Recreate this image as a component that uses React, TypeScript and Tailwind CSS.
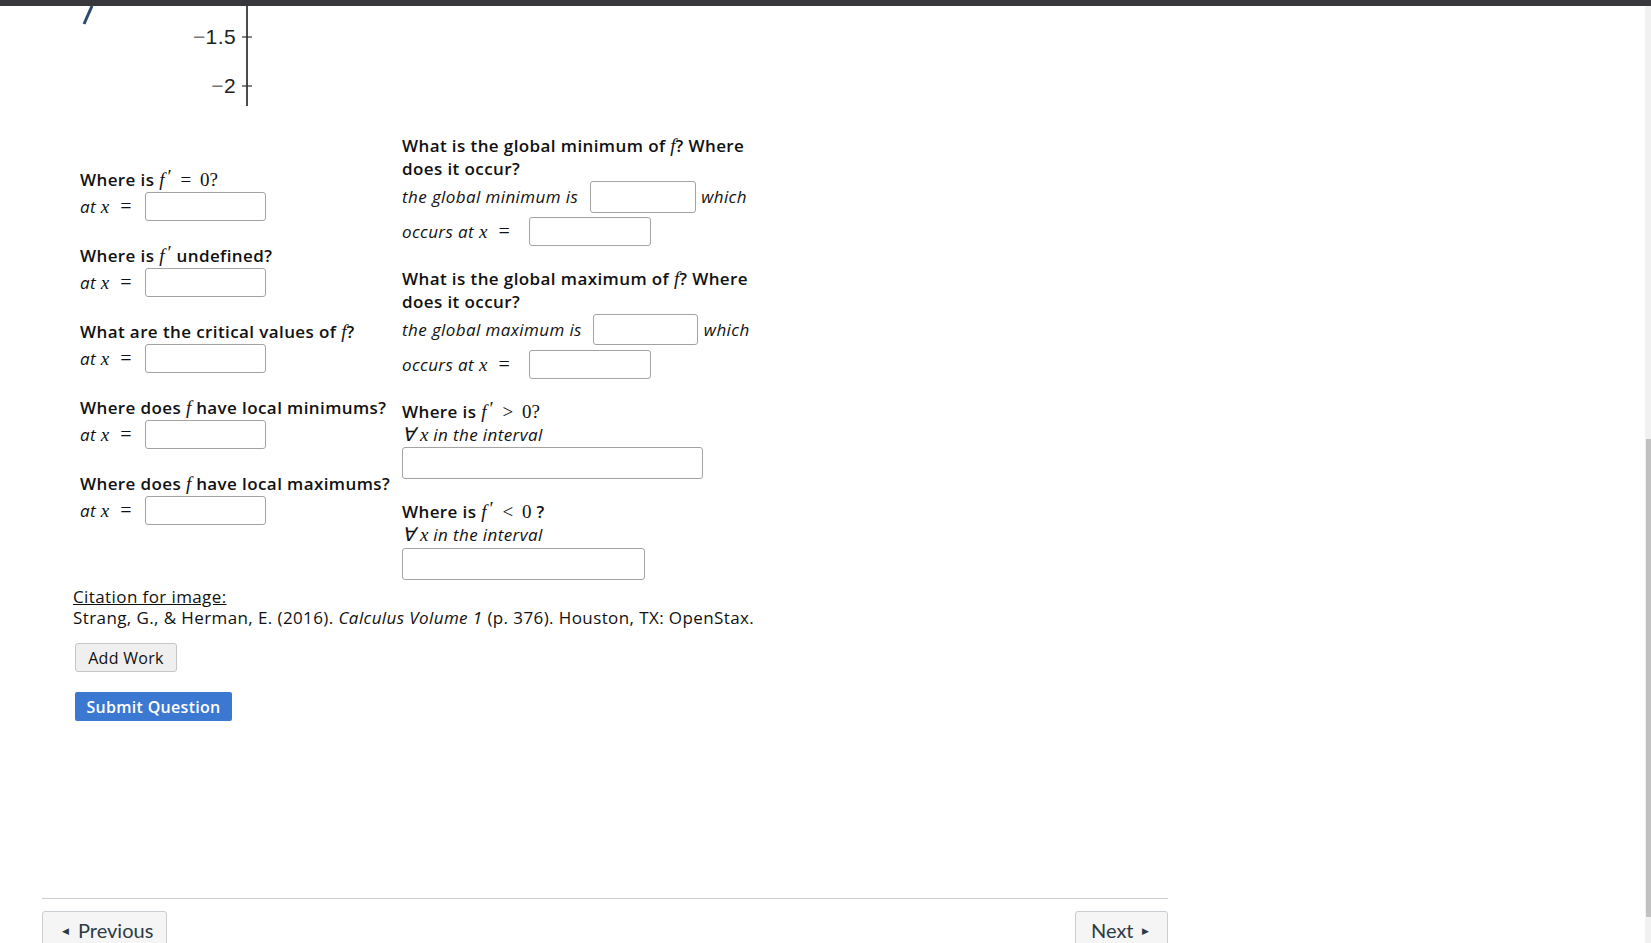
import type { ReactNode } from "react";

const MI = ({ children }: { children: ReactNode }) => (
  <span className="font-['Liberation_Serif',serif] italic text-[19px] leading-none font-normal tracking-normal">{children}</span>
);

const MO = ({ children, className = "" }: { children: ReactNode; className?: string }) => (
  <span className={"font-['Liberation_Serif',serif] text-[19px] leading-none font-normal tracking-normal " + className}>{children}</span>
);

const FPrime = () => (
  <>
    <MI>f</MI>
    <MO className="relative -top-[3px] text-[16px] ml-[3px]">′</MO>
  </>
);

const Box = ({ className }: { className: string }) => (
  <input
    type="text"
    className={"bg-white border border-[#a3a3a3] rounded-[3px] outline-none " + className}
  />
);

const AtX = () => (
  <div className="flex items-center h-[31px]">
    <span className="italic w-[65px] whitespace-nowrap">
      at <MI>x</MI> <MO className="ml-[5px] text-[20px]">=</MO>
    </span>
    <Box className="w-[121px] h-[29px]" />
  </div>
);

const LeftQ = ({ q }: { q: ReactNode }) => (
  <div className="mb-[22px]">
    <div className="h-[23px] leading-[23px] font-semibold whitespace-nowrap">{q}</div>
    <AtX />
  </div>
);

const Graph = () => (
  <svg width="320" height="100" viewBox="0 0 320 100" className="block">
    <line x1="42" y1="18" x2="50" y2="0" stroke="#2b4a6f" strokeWidth="3" />
    <line x1="205" y1="0" x2="205" y2="100" stroke="#111" strokeWidth="1.5" />
    <line x1="200" y1="31" x2="210" y2="31" stroke="#333" strokeWidth="1.2" />
    <line x1="200" y1="80" x2="210" y2="80" stroke="#333" strokeWidth="1.2" />
    <text x="194" y="38" textAnchor="end" fontSize="21" fill="#222" fontFamily="Liberation Sans, sans-serif">
      <tspan fill="#777">−</tspan>1.5
    </text>
    <text x="194" y="87" textAnchor="end" fontSize="21" fill="#222" fontFamily="Liberation Sans, sans-serif">
      <tspan fill="#777">−</tspan>2
    </text>
  </svg>
);

export default function App() {
  return (
    <div className="relative h-[943px] overflow-hidden bg-white text-[#111] text-[17px] tracking-[0.4px] font-['Open_Sans',sans-serif]">
      <div className="h-[6px] bg-[#38383c]" />

      <div className="ml-[42px] w-[1126px]">
        <Graph />

        {/* question table */}
        <div className="flex mt-[28px] pl-[38px]">
          <div className="w-[322px] pt-[34px]">
            <LeftQ
              q={
                <>
                  Where is <FPrime /> <MO className="mx-[4px]">=</MO> <MO>0?</MO>
                </>
              }
            />
            <LeftQ
              q={
                <>
                  Where is <FPrime /> undefined?
                </>
              }
            />
            <LeftQ
              q={
                <>
                  What are the critical values of <MI>f</MI>?
                </>
              }
            />
            <LeftQ
              q={
                <>
                  Where does <MI>f</MI> have local minimums?
                </>
              }
            />
            <LeftQ
              q={
                <>
                  Where does <MI>f</MI> have local maximums?
                </>
              }
            />
          </div>

          <div className="w-[400px]">
            <div className="leading-[23px] font-semibold">
              What is the global minimum of <MI>f</MI>? Where
              <br />
              does it occur?
            </div>
            <div className="flex items-center h-[33px] italic whitespace-nowrap">
              <span>the global minimum is</span>
              <Box className="w-[106px] h-[32px] ml-[12px]" />
              <span className="ml-[5px]">which</span>
            </div>
            <div className="flex items-center h-[29px] mt-[4px] italic whitespace-nowrap">
              <span>
                occurs at <MI>x</MI> <MO className="ml-[5px] text-[20px]">=</MO>
              </span>
              <Box className="w-[122px] h-[29px] ml-[18px]" />
            </div>

            <div className="leading-[23px] font-semibold mt-[21px]">
              What is the global maximum of <MI>f</MI>? Where
              <br />
              does it occur?
            </div>
            <div className="flex items-center h-[31px] mt-[1px] italic whitespace-nowrap">
              <span>the global maximum is</span>
              <Box className="w-[105px] h-[31px] ml-[11px]" />
              <span className="ml-[6px]">which</span>
            </div>
            <div className="flex items-center h-[29px] mt-[5px] italic whitespace-nowrap">
              <span>
                occurs at <MI>x</MI> <MO className="ml-[5px] text-[20px]">=</MO>
              </span>
              <Box className="w-[122px] h-[29px] ml-[18px]" />
            </div>

            <div className="h-[23px] leading-[23px] font-semibold mt-[21px] whitespace-nowrap">
              Where is <FPrime /> <MO className="mx-[4px]">&gt;</MO> <MO>0?</MO>
            </div>
            <div className="h-[23px] leading-[23px] italic">
              <MO className="mr-[5px]">∀</MO>
              <MI>x</MI> in the interval
            </div>
            <Box className="w-[301px] h-[32px] mt-[1px] block" />

            <div className="h-[23px] leading-[23px] font-semibold mt-[21px] whitespace-nowrap">
              Where is <FPrime /> <MO className="mx-[4px]">&lt;</MO> <MO>0</MO> ?
            </div>
            <div className="h-[23px] leading-[23px] italic">
              <MO className="mr-[5px]">∀</MO>
              <MI>x</MI> in the interval
            </div>
            <Box className="w-[243px] h-[32px] mt-[2px] block" />
          </div>
        </div>

        {/* citation + buttons */}
        <div className="pl-[31px] mt-[6px]">
          <div className="leading-[21px] underline">Citation for image:</div>
          <div className="leading-[21px]">
            Strang, G., &amp; Herman, E. (2016). <i>Calculus Volume 1</i> (p. 376). Houston, TX: OpenStax.
          </div>
          <button className="block mt-[15px] ml-[2px] w-[102px] h-[29px] bg-[#efefef] border border-[#c6c6c6] rounded-[3px] text-[16px] tracking-[0.3px] text-[#111]">
            Add Work
          </button>
          <button className="block mt-[20px] ml-[2px] w-[157px] h-[29px] bg-[#3a78d2] rounded-[2px] text-[16px] tracking-[0.3px] font-semibold text-white">
            Submit Question
          </button>
        </div>

        {/* module navigation footer */}
        <div className="mt-[177px] border-t border-[#c7cdd1] pt-[12px] flex justify-between font-['Lato',sans-serif] tracking-normal">
          <button className="flex items-center h-[38px] w-[125px] bg-[#f5f5f5] border border-[#c7cdd1] rounded-[3px] text-[20px] leading-none text-[#2d3b45] pl-[19px]">
            <span className="text-[9px] mr-[9px]">◀</span>Previous
          </button>
          <button className="flex items-center h-[38px] w-[93px] bg-[#f5f5f5] border border-[#c7cdd1] rounded-[3px] text-[20px] leading-none text-[#2d3b45] pl-[15px]">
            Next<span className="text-[9px] ml-[8px]">▶</span>
          </button>
        </div>
      </div>

      {/* window scrollbar */}
      <div className="absolute right-0 top-[6px] bottom-0 w-[6px] bg-[#f1f1f1]">
        <div className="absolute left-[1px] right-0 top-[433px] h-[478px] bg-[#c1c1c1]" />
      </div>
    </div>
  );
}
